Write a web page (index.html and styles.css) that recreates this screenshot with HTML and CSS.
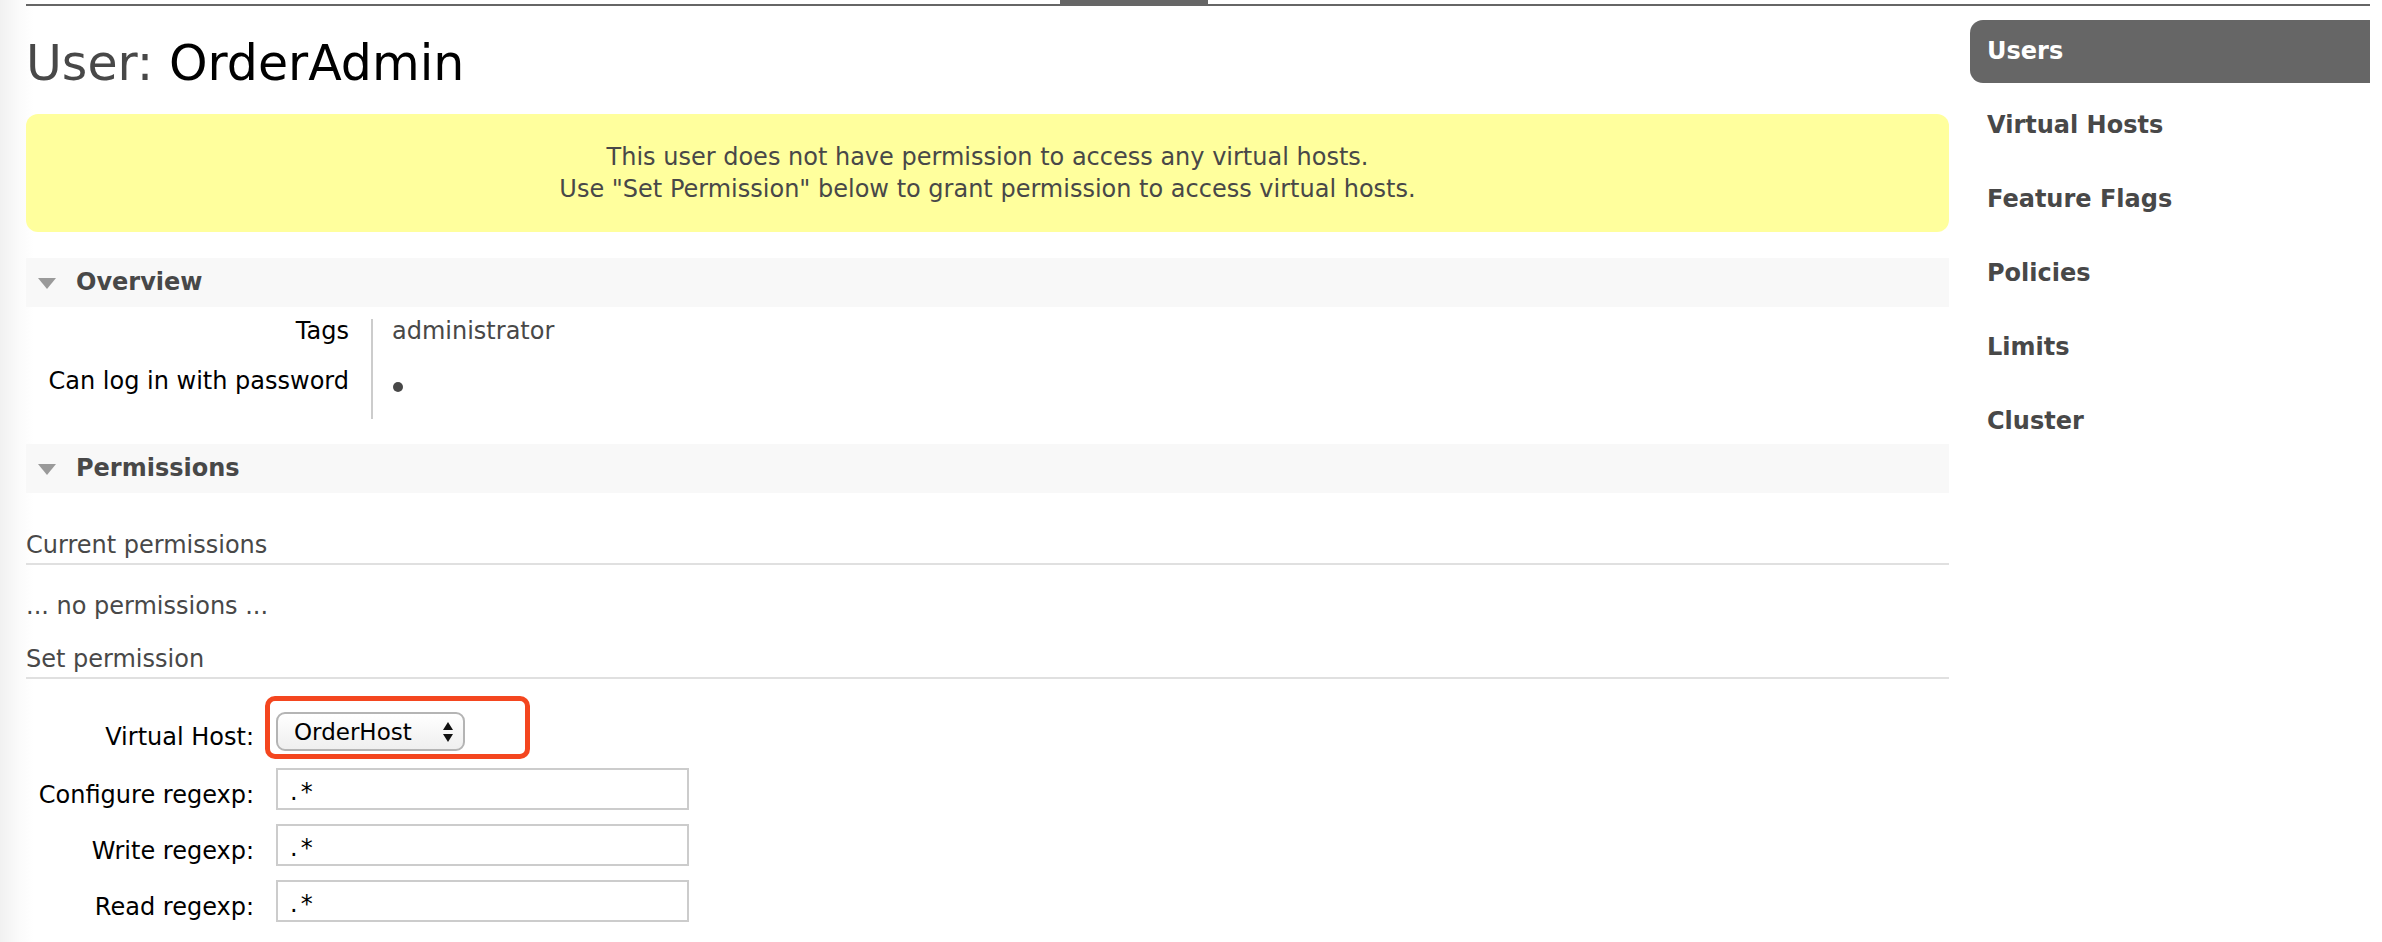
FILE: index.html
```html
<!DOCTYPE html>
<html lang="en">
<head>
<meta charset="utf-8">
<title>User: OrderAdmin</title>
<link rel="stylesheet" href="styles.css">
</head>
<body>
<div class="topline"><div class="tab"></div></div>
<div class="layout">
  <main class="main">
    <h1>User: <b>OrderAdmin</b></h1>
    <p class="warning">This user does not have permission to access any virtual hosts.<br>Use "Set Permission" below to grant permission to access virtual hosts.</p>

    <section class="section">
      <h2 class="section-head"><span class="tri"></span>Overview</h2>
      <table class="facts">
        <tr><th>Tags</th><td>administrator</td></tr>
        <tr><th>Can log in with password</th><td><span class="dot"></span></td></tr>
      </table>
    </section>

    <section class="section section-perm">
      <h2 class="section-head"><span class="tri"></span>Permissions</h2>
      <h3 class="sub">Current permissions</h3>
      <p class="none">... no permissions ...</p>
      <h3 class="sub sub-set">Set permission</h3>
      <form class="perm-form">
        <div class="row row-select">
          <label class="lbl lbl-select">Virtual Host:</label>
          <div class="select">
            <span>OrderHost</span>
            <svg class="arrows" width="12" height="22" viewBox="0 0 12 22"><path d="M6 1 L11 9 L1 9 Z" fill="#111"/><path d="M6 21 L11 13 L1 13 Z" fill="#111"/></svg>
          </div>
          <div class="highlight"></div>
        </div>
        <div class="row">
          <label class="lbl">Configure regexp:</label>
          <input class="field" type="text" value=".*">
        </div>
        <div class="row">
          <label class="lbl">Write regexp:</label>
          <input class="field" type="text" value=".*">
        </div>
        <div class="row">
          <label class="lbl">Read regexp:</label>
          <input class="field" type="text" value=".*">
        </div>
        <button class="submit" type="button" aria-label="Set permission"></button>
      </form>
    </section>
  </main>

  <nav class="sidebar">
    <ul>
      <li><a class="active">Users</a></li>
      <li><a>Virtual Hosts</a></li>
      <li><a>Feature Flags</a></li>
      <li><a>Policies</a></li>
      <li><a>Limits</a></li>
      <li><a>Cluster</a></li>
    </ul>
  </nav>
</div>
</body>
</html>
```

FILE: styles.css
```css
html, body {
  margin: 0;
  padding: 0;
}
body {
  font-family: "DejaVu Sans", Verdana, sans-serif;
  font-size: 24px;
  color: #484848;
  background: linear-gradient(to right, #f1f1f1 0px, #fbfbfb 20px, #ffffff 34px) no-repeat;
  background-color: #fff;
  height: 942px;
  overflow: hidden;
}

.topline {
  margin: 0 12px 0 26px;
  height: 4px;
  border-bottom: 2px solid #666;
  display: flex;
}
.tab {
  margin-left: 1034px;
  width: 148px;
  height: 4px;
  background: #666;
}

.layout {
  display: flex;
  align-items: flex-start;
}

.main {
  margin-left: 26px;
  width: 1923px;
  flex: none;
}

h1 {
  font-size: 49px;
  font-weight: normal;
  line-height: 56px;
  margin: 30px 0 0;
  color: #484848;
}
h1 b {
  color: #000;
  font-weight: normal;
}

.warning {
  margin: 22px 0 0;
  padding: 27px 0;
  line-height: 32px;
  text-align: center;
  background: #ffff9d;
  border-radius: 12px;
}

.section-head {
  margin: 26px 0 0;
  height: 49px;
  line-height: 49px;
  background: #f8f8f8;
  font-size: 24px;
  font-weight: bold;
  color: #484848;
  display: flex;
  align-items: center;
  padding-left: 12px;
}
.section-perm .section-head {
  margin-top: 25px;
}
.tri {
  width: 0;
  height: 0;
  border-left: 9px solid transparent;
  border-right: 9px solid transparent;
  border-top: 11px solid #9a9a9a;
  margin-right: 20px;
  margin-top: 2px;
}

.facts {
  border-collapse: collapse;
  border-spacing: 0;
  margin-top: 12px;
}
.facts th {
  width: 323px;
  text-align: right;
  font-weight: normal;
  color: #000;
  padding: 0 22px 26px 0;
  line-height: 24px;
  vertical-align: top;
}
.facts td {
  border-left: 2px solid #cccccc;
  padding: 0 0 26px 19px;
  line-height: 24px;
  vertical-align: top;
}
.dot {
  display: inline-block;
  width: 10px;
  height: 10px;
  border-radius: 50%;
  background: #484848;
  margin-left: 1px;
  vertical-align: -3px;
}

.sub {
  font-size: 24px;
  font-weight: normal;
  line-height: 32px;
  margin: 36px 0 0;
  padding-bottom: 2px;
  border-bottom: 2px solid #e0e0e0;
  color: #484848;
}
.none {
  margin: 25px 0 0;
  line-height: 32px;
}
.sub-set {
  margin-top: 21px;
}

.perm-form {
  margin-top: 33px;
  display: flex;
  flex-direction: column;
}
.row {
  display: flex;
  align-items: flex-start;
  margin-bottom: 13px;
  position: relative;
}
.row-select {
  margin-bottom: 15px;
}
.lbl {
  width: 228px;
  margin-right: 22px;
  text-align: right;
  color: #000;
  line-height: 32px;
  padding-top: 11px;
  flex: none;
}
.lbl-select {
  padding-top: 9px;
}

.select {
  box-sizing: border-box;
  width: 189px;
  height: 39px;
  border: 2px solid #b4b4b4;
  border-radius: 9px;
  background: linear-gradient(#ffffff, #efefef);
  color: #000;
  display: flex;
  align-items: center;
  justify-content: space-between;
  padding: 0 9px 0 16px;
  font-size: 23px;
}
.arrows {
  display: block;
}

.highlight {
  position: absolute;
  left: 239px;
  top: -16px;
  width: 265px;
  height: 63px;
  box-sizing: border-box;
  border: 5px solid #f4461f;
  border-radius: 10px;
}

.field {
  box-sizing: border-box;
  width: 413px;
  height: 42px;
  border: 2px solid #cccccc;
  background: #fff;
  padding: 6px 12px 0;
  font-family: "DejaVu Sans", Verdana, sans-serif;
  font-size: 24px;
  letter-spacing: 3px;
  color: #000;
  margin: 0;
  outline: none;
}

.submit {
  margin: 6px 0 0 4px;
  width: 203px;
  height: 50px;
  align-self: flex-start;
  background: #666;
  border: none;
  border-radius: 10px;
  padding: 0;
}

.sidebar {
  margin-left: 21px;
  width: 400px;
  margin-right: 12px;
  flex: none;
}
.sidebar ul {
  list-style: none;
  margin: 14px 0 0;
  padding: 0;
}
.sidebar li {
  margin-bottom: 11px;
}
.sidebar a {
  display: block;
  height: 63px;
  line-height: 63px;
  padding-left: 17px;
  font-weight: bold;
  font-size: 24px;
  color: #484848;
  border-radius: 13px 0 0 13px;
}
.sidebar a.active {
  background: #666;
  color: #fff;
}
```
